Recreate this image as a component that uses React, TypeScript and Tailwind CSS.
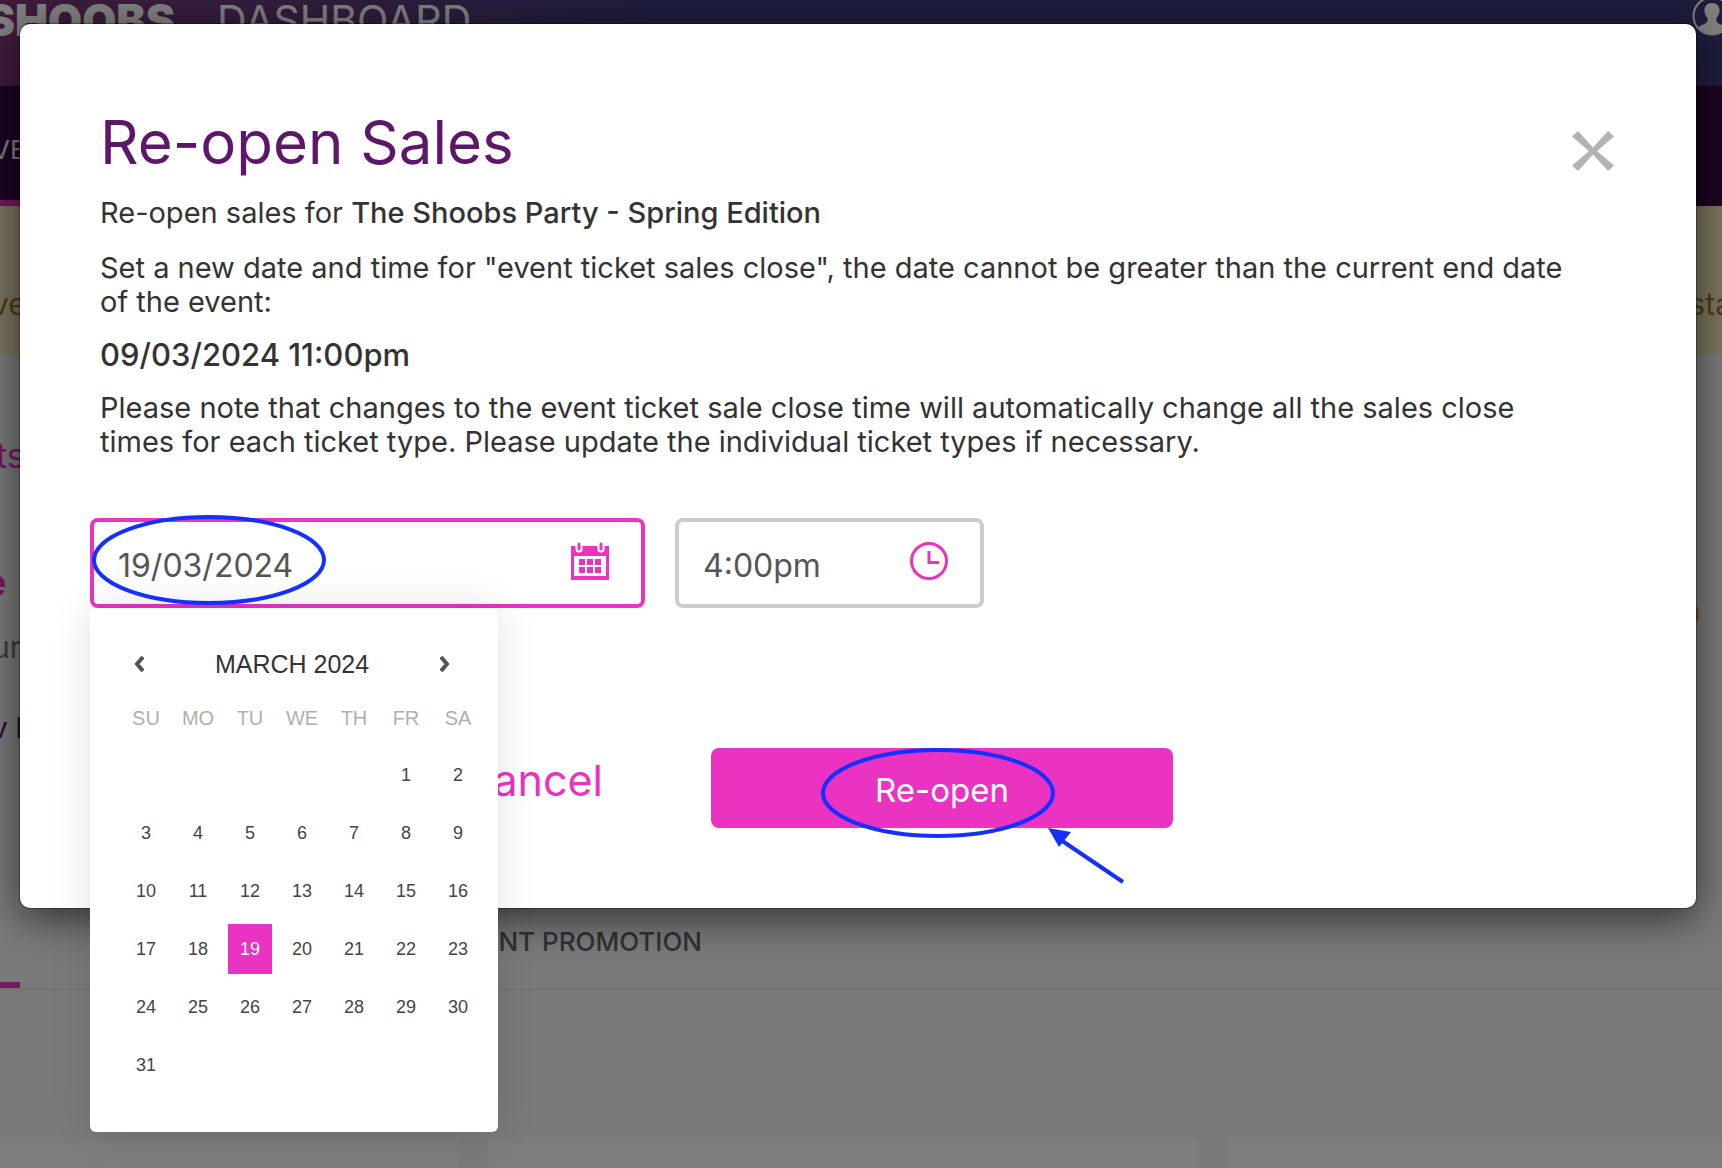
import { memo } from 'react'

const WEEKDAYS = ['SU', 'MO', 'TU', 'WE', 'TH', 'FR', 'SA']

// March 2024 starts on a Friday
const WEEKS = [
	[0, 0, 0, 0, 0, 1, 2],
	[3, 4, 5, 6, 7, 8, 9],
	[10, 11, 12, 13, 14, 15, 16],
	[17, 18, 19, 20, 21, 22, 23],
	[24, 25, 26, 27, 28, 29, 30],
	[31, 0, 0, 0, 0, 0, 0],
]

const SELECTED_DAY = 19

function CloseIcon() {
	return (
		<svg width="42" height="40" viewBox="0 0 42 40" fill="#b3b3b3">
			<path d="M6 0 21 16.500 36 0 42 5.500 25 20 42 34.500 36 40 21 23.500 6 40 0 34.500 17 20 0 5.500Z" />
		</svg>
	)
}

function CalendarIcon() {
	return (
		<svg width="38" height="38" viewBox="0 0 38 38" fill="#ea33c0">
			<path fillRule="evenodd" d="M0 4h38v34H0ZM3 14v20h32V14Z" />
			<path d="M8 2v5M30 2v5" stroke="#fff" strokeWidth="7" strokeLinecap="round" />
			<path d="M8 2v5M30 2v5" stroke="#ea33c0" strokeWidth="3" strokeLinecap="round" />
			<path d="M8 17h6v6H8zM16 17h6v6h-6zM24 17h6v6h-6zM8 25h6v6H8zM16 25h6v6h-6zM24 25h6v6h-6z" />
		</svg>
	)
}

function ClockIcon() {
	return (
		<svg width="38" height="38" viewBox="0 0 38 38" fill="none" stroke="#ea33c0">
			<circle cx="19" cy="19" r="17.500" strokeWidth="3" />
			<path d="M19 9v11.500h10" strokeWidth="3" />
		</svg>
	)
}

function AvatarIcon() {
	return (
		<svg width="40" height="40" viewBox="0 0 40 40">
			<circle cx="20" cy="20" r="18.500" fill="none" stroke="#fff" strokeWidth="2" />
			<path
				d="M20 7c-5 0-8 3.500-7.500 8 .2 3 1.500 5 3 7 .5 3-.5 5-3 6-3 1-5 2-6.500 3.500A18 18 0 0 0 34 31.500c-1.500-1.500-3.500-2.500-6.500-3.500-2.500-1-3.500-3-3-6 1.500-2 2.800-4 3-7C28 10.500 25 7 20 7Z"
				fill="#fff"
			/>
		</svg>
	)
}

const Page = memo(() => {
	return (
		<div aria-hidden="true" className="flex min-h-screen flex-col overflow-hidden bg-[#f4f4f4]">
			<header className="flex h-[86px] items-start justify-between bg-linear-to-r from-[#7f3678] via-[#3e3a7c] via-38% to-[#3e3a7c]">
				<div className="flex items-start gap-[42px]">
					<div className="flex w-[175px] justify-end text-[44px] leading-[40px] font-black text-white">SHOOBS</div>
					<div className="text-[41px] leading-[40px] text-white">DASHBOARD</div>
				</div>
				<div className="-mt-1 -mr-[10px]">
					<AvatarIcon />
				</div>
			</header>
			<nav className="flex h-[120px] items-stretch bg-[#390b42] text-[26px] text-white">
				<div className="-ml-2 flex items-center border-b-6 border-[#ea33c0] pt-3">VE</div>
			</nav>
			<div className="flex h-[148px] items-center justify-between bg-[#f5e8bc] pt-12 text-[30px] text-[#977a2c]">
				<span className="-ml-2">ve</span>
				<span className="-mr-[10px]">sta</span>
			</div>
			<div className="relative flex h-[630px] flex-col">
				<div className="mt-20 -ml-1 text-[34px] leading-[44px] text-[#ea33c0]">ts</div>
				<div className="mt-[82px] -ml-4 text-[38px] leading-[44px] font-semibold text-[#ea33c0]">e</div>
				<div className="mt-[21px] -ml-2 text-[30px] leading-[44px] text-[#777782]">ur</div>
				<div className="mt-[37px] -ml-2 text-[28px] leading-[44px] text-[#5c1769]">v l</div>
				<div className="absolute top-[247px] right-[23px] size-[26px] rounded-full bg-[#f0a81c]" />
			</div>
			<div className="-mt-[86px] flex h-[92px] items-start border-b-2 border-[#e4e4e4]">
				<div className="h-[90px] w-5 border-b-6 border-[#ea33c0]" />
				<div className="flex w-[682px] justify-end pt-6 text-[26px] leading-[40px] font-medium text-[#63636d]">EVENT PROMOTION</div>
			</div>
			<div className="mt-[151px] grid flex-1 grid-cols-[458fr_710fr_494fr] gap-[30px]">
				<div className="bg-[#fafafa]" />
				<div className="bg-[#fafafa]" />
				<div className="bg-[#fafafa]" />
			</div>
		</div>
	)
})

function DatePicker() {
	return (
		<div className="absolute top-full left-0 z-10 h-[524px] w-[408px] rounded-md bg-white pt-[34px] pr-[14px] pl-[30px] font-['Liberation_Sans',sans-serif] text-[#333] shadow-[0_0_40px_rgba(0,0,0,0.12)]">
			<div className="flex h-11 items-center justify-between pr-[30px] pl-[10px]">
				<button type="button" aria-label="Previous month" className="px-1">
					<svg width="10" height="16" viewBox="0 0 10 16" fill="none" stroke="#555" strokeWidth="4">
						<path d="M9 1 3 8l6 7" />
					</svg>
				</button>
				<div className="text-[25px]">MARCH 2024</div>
				<button type="button" aria-label="Next month" className="px-1">
					<svg width="10" height="16" viewBox="0 0 10 16" fill="none" stroke="#555" strokeWidth="4">
						<path d="m1 1 6 7-6 7" />
					</svg>
				</button>
			</div>
			<table className="w-full table-fixed border-collapse text-center">
				<thead>
					<tr className="h-[60px]">
						{WEEKDAYS.map((name) => (
							<th key={name} scope="col" className="px-0 pt-1 pb-0 text-xl font-normal text-[#b0b0a8]">
								{name}
							</th>
						))}
					</tr>
				</thead>
				<tbody>
					{WEEKS.map((week) => (
						<tr key={week.join()} className="h-[58px]">
							{week.map((day, i) => (
								<td key={i} className="p-0">
									{day > 0 && (
										<button
											type="button"
											className={
												day === SELECTED_DAY
													? 'h-[50px] w-11 bg-[#ea33c0] text-lg text-white'
													: 'h-[50px] w-11 text-lg text-[#444]'
											}
										>
											{day}
										</button>
									)}
								</td>
							))}
						</tr>
					))}
				</tbody>
			</table>
		</div>
	)
}

function DateTimeFields() {
	return (
		<div className="-ml-[10px] flex gap-[30px]">
			<div className="relative">
				<label htmlFor="close-date" className="sr-only">
					Date
				</label>
				<input
					id="close-date"
					type="text"
					defaultValue="19/03/2024"
					className="h-[90px] w-[555px] rounded-lg border-4 border-[#ea33c0] bg-white px-6 pt-1 text-[32px] text-[#555] outline-none"
				/>
				<span className="pointer-events-none absolute top-6 right-9">
					<CalendarIcon />
				</span>
				<DatePicker />
				<svg className="pointer-events-none absolute -top-1 left-0 z-20" width="240" height="94" fill="none">
					<ellipse cx="119" cy="46" rx="115" ry="43" stroke="#1330ff" strokeWidth="4" />
				</svg>
			</div>
			<div className="relative">
				<label htmlFor="close-time" className="sr-only">
					Time
				</label>
				<input
					id="close-time"
					type="text"
					defaultValue="4:00pm"
					className="h-[90px] w-[309px] rounded-lg border-4 border-[#ccc] bg-white px-6 pt-1 text-[32px] text-[#555] outline-none"
				/>
				<span className="pointer-events-none absolute top-6 right-9">
					<ClockIcon />
				</span>
			</div>
		</div>
	)
}

function ReopenDialog() {
	return (
		<div
			role="dialog"
			aria-labelledby="reopen-title"
			className="absolute top-6 right-[26px] left-5 rounded-[10px] bg-white px-20 pt-[82px] pb-20 text-[29px] leading-[34px] text-[#333] shadow-[0_0_0_1px_rgba(0,0,0,0.3),0_10px_40px_rgba(0,0,0,0.6)]"
		>
			<div className="flex items-start justify-between">
				<h1 id="reopen-title" className="text-[60px] leading-[72px] text-[#5c1769]">
					Re-open Sales
				</h1>
				<button type="button" aria-label="Close" className="mt-[25px] mr-[2px]">
					<CloseIcon />
				</button>
			</div>
			<p className="mt-[18px] pr-8">
				Re-open sales for <strong className="font-medium">The Shoobs Party - Spring Edition</strong>
			</p>
			<p className="mt-[21px] pr-8">
				Set a new date and time for "event ticket sales close", the date cannot be greater than the current end date of the event:
			</p>
			<p className="mt-4 text-[31px] leading-[40px] font-medium">09/03/2024 11:00pm</p>
			<p className="mt-4 pr-8">
				Please note that changes to the event ticket sale close time will automatically change all the sales close times for each ticket
				type. Please update the individual ticket types if necessary.
			</p>
			<div className="mt-[59px]">
				<DateTimeFields />
			</div>
			<div className="mt-[140px] grid grid-cols-[503px_462px] items-center gap-[108px]">
				<button type="button" className="justify-self-end pb-4 text-[43px] text-[#ea33c0]">
					Cancel
				</button>
				<button type="button" className="relative h-20 rounded-lg bg-[#ea33c0] pt-1 text-[33px] text-white">
					Re-open
					<svg className="pointer-events-none absolute -top-1 left-[108px]" width="310" height="144" fill="none">
						<ellipse cx="119" cy="49" rx="115" ry="43" stroke="#1330ff" strokeWidth="4" />
						<path d="m236 92 68 46" stroke="#1330ff" strokeWidth="4" />
						<path d="m229 84 23 4-12 15Z" fill="#1330ff" />
					</svg>
				</button>
			</div>
		</div>
	)
}

export default function App() {
	return (
		<div className="relative min-h-screen overflow-hidden font-[Inter,sans-serif]">
			<Page />
			<div className="absolute inset-0 bg-black/50" />
			<ReopenDialog />
		</div>
	)
}
